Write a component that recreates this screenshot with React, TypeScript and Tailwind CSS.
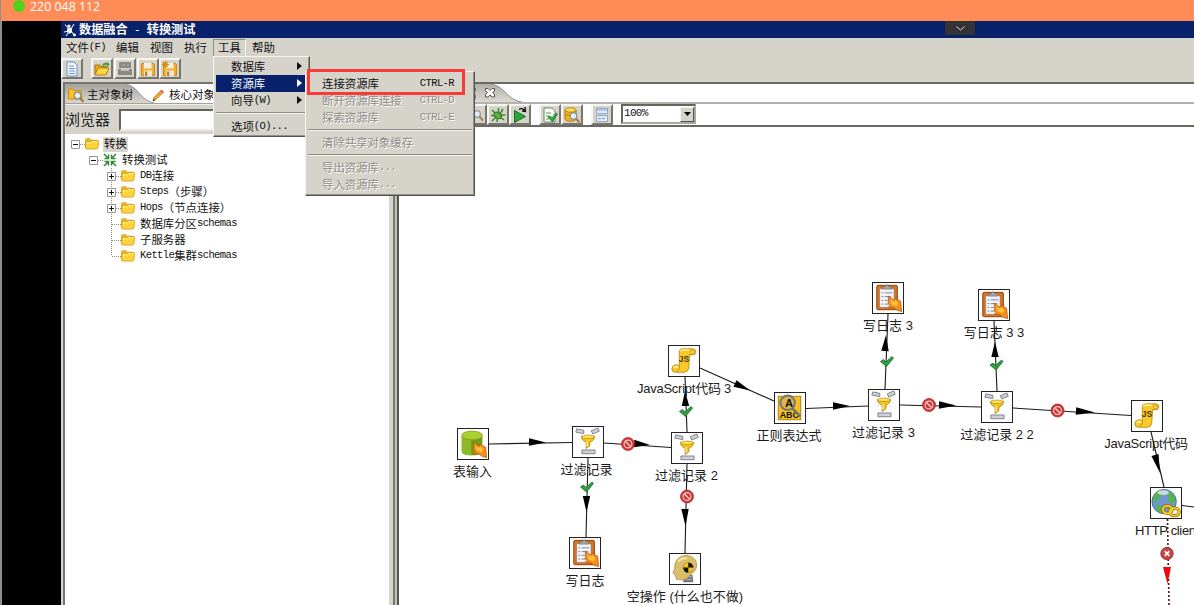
import React from "react";
import clsx from "clsx";

/* Splits mixed text so CJK glyphs and half-width Latin glyphs keep their own metrics. */
function Mixed({ text, bold }: { text: string; bold?: boolean }) {
  const runs = text.match(/[\u3000-\uffef]+|[^\u3000-\uffef]+/g) ?? [];
  return (
    <span className={clsx("inline-flex items-center whitespace-pre", bold && "font-bold")}>
      {runs.map((r, i) =>
        /[\u3000-\uffef]/.test(r) ? (
          <span key={i} className="font-['Noto_Sans_CJK_SC',sans-serif]">{r}</span>
        ) : (
          <span key={i} className="font-['Liberation_Mono','Noto_Sans_CJK_SC',monospace] text-[10.5px] tracking-[-0.6px]">{r}</span>
        ),
      )}
    </span>
  );
}

function Folder({ className = "h-[12px] w-[14px]" }: { className?: string }) {
  return (
    <svg viewBox="0 0 14 12" className={clsx("shrink-0", className)}>
      <path d="M.5 9.500V2Q.5.7 1.800.7H5l1.300 1.500h5.500q1 0 1 1v1" fill="#f4b820" stroke="#d39a18" strokeWidth=".8" />
      <path d="M.6 3.600h5.400l1-.9h5.800q.8 0 .7 1.200l-.6 6q-.2 1.100-1.400 1.100H2Q.7 11 .7 10.200Z" fill="#ffd43a" stroke="#cf9714" strokeWidth=".8" />
      <path d="M1.600 4.600H6.500l1-.9H12.500" stroke="#fff2a0" fill="none" />
    </svg>
  );
}

function ToolButton({ children, className }: { children: React.ReactNode; className?: string }) {
  return (
    <div className={clsx("flex h-[21px] w-[22px] shrink-0 items-center justify-center border-2 border-t-[#f6f5f1] border-r-[#77756f] border-b-[#77756f] border-l-[#f6f5f1] bg-[#d6d3cb]", className)}>
      <svg viewBox="0 0 16 16" className="h-[16px] w-[16px] shrink-0">{children}</svg>
    </div>
  );
}

function Floppy({ star }: { star?: boolean }) {
  return (
    <>
      <path d="M1.500 2.500h12l1 1v11h-13z" fill="#f5b02a" stroke="#cf8814" />
      <path d="M4 2h7.500v5.500H4z" fill="#f3efe4" />
      <path d="M4 9.500h8V15H4z" fill="#ece8dc" />
      <path d="M5 10.500h2.200V15H5z" fill="#c87c0c" />
      {star && <path d="M3.500 0v7M0 3.500h7M1 1l5 5M6 1 1 6" stroke="#d98a08" strokeWidth="1.100" />}
    </>
  );
}

function Magnifier({ x, y }: { x: number; y: number }) {
  return (
    <g transform={`translate(${x} ${y})`}>
      <path d="m2.500 2.500 3.500 4" stroke="#a87a3c" strokeWidth="2" />
      <circle r="3.300" fill="#e4eef2" stroke="#8b8f90" strokeWidth="1.200" />
    </g>
  );
}

function Connector({ kind }: { kind: "plus" | "minus" | "tee" | "end" }) {
  const boxed = kind === "plus" || kind === "minus";
  return (
    <svg viewBox="0 0 18 16" className="h-[16px] w-[18px] shrink-0">
      <path d="M9 8.500h9" stroke="#8c8c8c" strokeDasharray="1 1" />
      {kind !== "minus" && <path d={kind === "end" ? "M8.500 0v8" : "M8.500 0v16"} stroke="#8c8c8c" strokeDasharray="1 1" />}
      {boxed && (
        <>
          <path d="M4.500 4.500h8v8h-8z" fill="#fff" stroke="#959595" />
          <path d={kind === "plus" ? "M6 8.500h5M8.500 6v5" : "M6 8.500h5"} stroke="#111" />
        </>
      )}
    </svg>
  );
}

const treeRows: { indent: string; kind: "plus" | "minus" | "tee" | "end"; icon: "folder" | "trans"; label: string; selected?: boolean }[] = [
  { indent: "pl-[2px]", kind: "minus", icon: "folder", label: "转换", selected: true },
  { indent: "pl-[20px]", kind: "minus", icon: "trans", label: "转换测试" },
  { indent: "pl-[38px]", kind: "plus", icon: "folder", label: "DB连接" },
  { indent: "pl-[38px]", kind: "plus", icon: "folder", label: "Steps（步骤）" },
  { indent: "pl-[38px]", kind: "plus", icon: "folder", label: "Hops（节点连接）" },
  { indent: "pl-[38px]", kind: "tee", icon: "folder", label: "数据库分区schemas" },
  { indent: "pl-[38px]", kind: "tee", icon: "folder", label: "子服务器" },
  { indent: "pl-[38px]", kind: "end", icon: "folder", label: "Kettle集群schemas" },
];

type IconKind = "table" | "filter" | "log" | "dummy" | "js" | "regex" | "http";

const Hand = () => (
  <>
    <path d="m16 14 2.500 1.500 3.500 2.500 2-1.500 5.500 3 1 11-5-1.500-3.500-2.500-5.500-.5 1.500-2-2-2.500 1-2z" fill="#f58f1c" stroke="#b5560c" strokeWidth=".8" />
    <path d="m18 17 4 3 2-1.500 3 2.500-2 4-5-2z" fill="#ffc13c" />
  </>
);

function NodeIcon({ kind }: { kind: IconKind }) {
  return (
    <svg viewBox="0 0 32 32" className="h-full w-full">
      {kind === "table" && (
        <>
          <path d="M4 7v17c0 5.500 22 5.500 22 0V7" fill="#739c1b" />
          <path d="M4 7v17c0 2.500 4 4 10 4V10z" fill="#90b928" />
          <ellipse cx="15" cy="6.800" rx="11" ry="4.600" fill="#a9d02e" stroke="#7b9f25" strokeWidth=".8" />
          <Hand />
        </>
      )}
      {kind === "filter" && (
        <>
          <path d="m4 2 7.500 1.500v3.500L3 5.500zM19.500 4l7-3 1.500 3.500-7 3zM9.500 24.500h14v4h-14z" fill="#ccd0d8" stroke="#72767c" strokeWidth=".9" />
          <path d="M9 10h14c0 3-2 5-5 6v4l-4 3v-7c-3-1-5-3-5-6Z" fill="#f6c41d" stroke="#a5790b" strokeWidth=".8" />
          <ellipse cx="16" cy="10.500" rx="7" ry="1.800" fill="#ffe35a" stroke="#b5860c" strokeWidth=".7" />
          <path d="M15 15v6" stroke="#fff19a" strokeWidth="1.300" />
        </>
      )}
      {kind === "log" && (
        <>
          <rect x="4" y="2.500" width="22" height="26" rx="1.500" fill="#d9731c" stroke="#8d3c0c" />
          <path d="M7 6h15.500v20H7z" fill="#f1f3f9" stroke="#8c6b5a" strokeWidth=".6" />
          <path d="M10 6.500V4h3Q13 2 15 2t2 2h3v2.500z" fill="#a5a8a8" stroke="#5f6060" strokeWidth=".6" />
          <path d="M9 10.500h2m1.500 0h8m-11.500 4h2m1.500 0h7M9 18.500h2m1.500 0h5M9 22.500h2m1.500 0h4" stroke="#7c8292" strokeWidth="1" />
          <Hand />
        </>
      )}
      {kind === "dummy" && (
        <>
          <path d="M15 22h9l1 8H14z" fill="#777" />
          <path d="M16 24h7m-7 3h7" stroke="#bbb" />
          <path d="M7 27c-1-3-1-4-2-5l-2-2 2-4C4.500 6 11 1.500 17 1.500c8 0 11.500 5.500 11.500 10.500 0 6-5 8-7.500 11-3 5-8 5-14 4Z" fill="#d9bd68" stroke="#9c7f35" strokeWidth=".7" />
          <path d="M9 8c2-3 6-4 9-3" stroke="#f2dfa2" strokeWidth="2.500" fill="none" />
          <circle cx="19.500" cy="14.500" r="5.500" fill="#111" />
          <path d="M19.500 14.500v-5.500a5.500 5.500 0 0 0-5.500 5.500zM19.500 14.500v5.500a5.500 5.500 0 0 0 5.500-5.500z" fill="#efc51e" />
        </>
      )}
      {kind === "js" && (
        <>
          <path d="M11 6q0-3 4-3h10q4 0 3.500 4-.5 3-4 2.500L22 9l-1 15q-1 4-5 4H7q-4 0-4-3.500T7 20q3 0 4 1Z" fill="#f9c928" stroke="#b98310" strokeWidth=".9" />
          <path d="M12 5q3-1 9-.5M5 23q3-2 6 0" stroke="#fff09a" strokeWidth="1.600" fill="none" />
          <circle cx="25" cy="6.500" r="1.800" fill="#ffe77a" stroke="#b98310" strokeWidth=".7" />
          <path d="M11 21q1 4-3 6" stroke="#b98310" fill="none" />
          <text x="10.500" y="17.500" fontSize="9" fontWeight="bold" fontFamily="Liberation Sans, sans-serif" fill="#4a3a08">JS</text>
        </>
      )}
      {kind === "regex" && (
        <>
          <rect x="3.500" y="3.500" width="24" height="25" fill="#f7bf22" stroke="#a87c10" />
          <circle cx="13.500" cy="10.500" r="7.700" fill="#dfb64c" stroke="#777a74" strokeWidth="2.200" />
          <text x="15" y="15" textAnchor="middle" fontSize="12" fontWeight="bold" fontFamily="Liberation Sans, sans-serif" fill="#15130c">A</text>
          <text x="5" y="26.500" fontSize="9.500" fontWeight="bold" fontFamily="Liberation Sans, sans-serif" fill="#15130c">ABC</text>
          <path d="m18.500 16.500 8.500 8.500" stroke="#6d716d" strokeWidth="2.600" />
        </>
      )}
      {kind === "http" && (
        <>
          <circle cx="14" cy="14.500" r="13" fill="#6f97cc" stroke="#4d72a5" />
          <path d="M4 7 9 3l4 1-1 4-4 2-2 4-4 1Q2 10 4 7Zm14-3 5 2 3 5-1 4-4 1-3-4 1-3-3-2ZM5 18l5 1 3 4-3 4q-5-3-5-9Zm14 0 4 1-1 3-4 1Z" fill="#57b548" />
          <ellipse cx="13" cy="5" rx="6" ry="2.500" fill="#fff" opacity=".65" />
          <g fill="none" stroke="#9b6d05" strokeWidth="3.600"><ellipse cx="17.500" cy="23" rx="5" ry="4" /><ellipse cx="25" cy="25.500" rx="5" ry="4" /></g>
          <g fill="none" stroke="#fbd22a" strokeWidth="2"><ellipse cx="17.500" cy="23" rx="5" ry="4" /><ellipse cx="25" cy="25.500" rx="5" ry="4" /></g>
        </>
      )}
    </svg>
  );
}

/* Node boxes on the free canvas; cx is the middle of the caption. */
const nodes: { x: number; y: number; cx: number; kind: IconKind; label: string }[] = [
  { x: 457, y: 428, cx: 472.5, kind: "table", label: "表输入" },
  { x: 572, y: 426, cx: 586.5, kind: "filter", label: "过滤记录" },
  { x: 671, y: 432, cx: 686.5, kind: "filter", label: "过滤记录 2" },
  { x: 569, y: 537, cx: 585, kind: "log", label: "写日志" },
  { x: 669, y: 553, cx: 685, kind: "dummy", label: "空操作 (什么也不做)" },
  { x: 668, y: 345, cx: 684, kind: "js", label: "JavaScript代码 3" },
  { x: 774, y: 392, cx: 789, kind: "regex", label: "正则表达式" },
  { x: 872, y: 282, cx: 888, kind: "log", label: "写日志 3" },
  { x: 978, y: 289, cx: 994, kind: "log", label: "写日志 3 3" },
  { x: 868, y: 389, cx: 883.5, kind: "filter", label: "过滤记录 3" },
  { x: 981, y: 391, cx: 997, kind: "filter", label: "过滤记录 2 2" },
  { x: 1131, y: 400, cx: 1146, kind: "js", label: "JavaScript代码" },
  { x: 1150, y: 487, cx: 1167, kind: "http", label: "HTTP client" },
];

const OX = 399;
const OY = 127;

/* Hops: line ends, then the arrow head's base centre and tip. */
const hops = [
  [489, 444, 572, 442.5, 529, 442, 546, 442.5],
  [604, 443, 671, 447.5, 634, 443.5, 650, 445],
  [588, 458, 586, 537, 586.5, 496, 586.5, 512],
  [687, 432, 685, 377, 685.5, 406, 685, 391],
  [687, 464, 685, 553, 685, 509, 685.5, 526],
  [700, 368, 774, 401, 735, 383.5, 750, 390.5],
  [806, 408.5, 868, 406, 833, 406, 850, 406],
  [885, 389, 888, 314, 885, 351, 886, 335],
  [900, 405, 981, 407, 939, 405, 956, 405.5],
  [997, 391, 994, 321, 995, 357, 995, 342],
  [1013, 408, 1131, 415.5, 1076, 411, 1095, 412.5],
  [1151, 432, 1164, 487, 1155, 455, 1160, 473],
];

function head(bx: number, by: number, tx: number, ty: number) {
  const l = Math.hypot(tx - bx, ty - by);
  const nx = (-(ty - by) / l) * 3.7;
  const ny = ((tx - bx) / l) * 3.7;
  return `${bx + nx},${by + ny} ${bx - nx},${by - ny} ${tx},${ty}`;
}

const checks = [[587, 487], [686, 411.5], [887, 361.5], [996.5, 365]];
const stops = [[628, 444], [687, 496.5], [929, 405], [1057.5, 410.5]];

function Canvas() {
  return (
    <div className="relative grow overflow-hidden bg-white">
      {nodes.map((n) => (
        <React.Fragment key={n.label}>
          <div className="absolute h-[32px] w-[32px] border border-[#222] bg-white" style={{ left: n.x - OX, top: n.y - OY }}>
            <NodeIcon kind={n.kind} />
          </div>
          <div
            className={clsx(
              "absolute -translate-x-1/2 whitespace-pre font-['Liberation_Sans','Noto_Sans_CJK_SC',sans-serif] text-[13px] leading-[18px] text-[#1c1c1c]",
              n.kind === "js" && "tracking-[-0.25px]",
              n.kind === "http" && "tracking-[-0.35px]",
            )}
            style={{ left: n.cx - OX, top: n.y - OY + 35 }}
          >
            {n.label}
          </div>
        </React.Fragment>
      ))}
      <svg viewBox="399 127 795 478" className="absolute top-0 left-0 h-[478px] w-[795px]">
        {hops.map((h, i) => (
          <g key={i}>
            <path d={`M${h[0]} ${h[1]}L${h[2]} ${h[3]}`} stroke="#1a1a1a" strokeWidth="1.100" />
            <polygon points={head(h[4], h[5], h[6], h[7])} fill="#000" />
          </g>
        ))}
        <path d="M1182 505.500 1194 507" stroke="#1a1a1a" />
        <path d="M1167.500 519 1169 605" stroke="#5c1010" strokeWidth="1.600" strokeDasharray="2 2" />
        <polygon points="1163,567 1171,567 1167.500,584" fill="#f00808" />
        {checks.map(([x, y]) => (
          <g key={x} transform={`translate(${x} ${y})`}>
            <path d="M-6.500 0-3.500-2-1 .5 5-5 6.500-3.500-.5 5z" fill="#2f9e3f" stroke="#16702a" strokeWidth=".8" />
          </g>
        ))}
        {stops.map(([x, y]) => (
          <g key={x} transform={`translate(${x} ${y})`}>
            <circle r="6.500" fill="#cf3434" stroke="#b52c2c" strokeWidth=".8" />
            <circle r="3.900" fill="none" stroke="#f0cfcf" strokeWidth="1.100" />
            <path d="m-2.700-2.700 5.400 5.400" stroke="#f0cfcf" strokeWidth="1.500" />
          </g>
        ))}
        <g transform="translate(1167 553.500)">
          <circle r="6.200" fill="#c94444" stroke="#8f2c2c" strokeWidth=".8" />
          <path d="m-2.300-2.300 4.600 4.600m0-4.600-4.600 4.600" stroke="#fff" strokeWidth="1.800" />
        </g>
      </svg>
    </div>
  );
}

const popup = "absolute flex flex-col border border-t-[#f4f3ef] border-r-[#55534e] border-b-[#55534e] border-l-[#f4f3ef] bg-[#d6d3cb] text-[11.4px] leading-[17px] shadow-[inset_-1px_-1px_0_#94928b]";

function Arrow() {
  return (
    <svg viewBox="0 0 5 8" className="mb-[2px] h-[8px] w-[5px]"><path d="M0 0 5 4 0 8z" fill="currentColor" /></svg>
  );
}

function Rule({ className }: { className: string }) {
  return <div className={clsx("h-[2px] shrink-0 border-t border-b border-t-[#8e8c85] border-b-[#f4f3ef]", className)} />;
}

function ToolsMenu() {
  return (
    <div className={clsx(popup, "top-[56px] left-[213px] h-[81px] w-[97px] px-[2px] pt-[1px]")}>
      {["数据库", "资源库", "向导(W)"].map((t, i) => (
        <div key={t} className={clsx("flex h-[17px] shrink-0 items-center justify-between pr-[5px] pl-[15px]", i === 1 ? "bg-[#08216b] text-white" : "text-[#111]")}>
          <Mixed text={t} />
          <Arrow />
        </div>
      ))}
      <Rule className="mt-[3px] mb-[4px]" />
      <div className="flex h-[17px] items-center pl-[15px] text-[#111]"><Mixed text="选项(O)..." /></div>
    </div>
  );
}

function SubItem({ text, keys, off }: { text: string; keys?: string; off?: boolean }) {
  return (
    <div className={clsx("flex h-[17px] shrink-0 items-center justify-between pr-[18px] pl-[14px]", off ? "text-[#8f8d87] [text-shadow:1px_1px_0_#fff]" : "text-[#111]")}>
      <Mixed text={text} />
      {keys && <Mixed text={keys} />}
    </div>
  );
}

function RepositoryMenu() {
  return (
    <div className={clsx(popup, "top-[71px] left-[305px] h-[125px] w-[170px] px-[2px] pt-[3px]")}>
      <SubItem text="连接资源库" keys="CTRL-R" />
      <SubItem text="断开资源库连接" keys="CTRL-D" off />
      <SubItem text="探索资源库" keys="CTRL-E" off />
      <Rule className="mt-[3px] mb-[3px]" />
      <SubItem text="清除共享对象缓存" off />
      <Rule className="mt-[3px] mb-[3px]" />
      <SubItem text="导出资源库..." off />
      <SubItem text="导入资源库..." off />
      <div className="absolute top-[-3px] left-[1px] h-[26px] w-[158px] border-[3px] border-[#f93a36]" />
    </div>
  );
}

function LeftPanel() {
  return (
    <div className="flex w-[328px] shrink-0 flex-col border-t-2 border-l-2 border-t-[#77756f] border-l-[#77756f] bg-[#d6d3cb]">
      <div className="relative flex h-[19px] shrink-0 items-center overflow-hidden text-[11.5px] text-[#111]">
        <svg viewBox="0 0 326 19" className="absolute top-0 left-0 h-[19px] w-[326px]">
          <defs>
            <linearGradient id="tabShade" x1="0" x2="0" y1="0" y2="1"><stop offset="0" stopColor="#a5a39d" /><stop offset="1" stopColor="#d9d6cf" /></linearGradient>
          </defs>
          <path d="M0 0h326v19H0z" fill="#fff" />
          <path d="M0 0h60q8 1 14 9t15 10H0z" fill="url(#tabShade)" />
          <path d="M60 0q8 1 14 9t15 10" fill="none" stroke="#9a9892" />
        </svg>
        <div className="relative flex items-center pt-[3px] pl-[3px]">
          <svg viewBox="0 0 16 15" className="h-[15px] w-[16px]">
            <path d="M.5 11V2Q.5 1 2 1h3l1 1.500h7V5l1 6z" fill="#f9c22a" stroke="#c98a0c" />
            <Magnifier x={9.5} y={7.5} />
          </svg>
          <span className="ml-[3px]"><Mixed text="主对象树" /></span>
          <svg viewBox="0 0 12 13" className="ml-[19px] h-[13px] w-[12px]">
            <path d="M1 12 2 8.500 9 1.500l2 2-7 7z" fill="#f5ab28" stroke="#a86712" strokeWidth=".8" />
            <path d="m8 2.500 1.500-2L12 3l-1.500 1.500z" fill="#e06a5a" /><path d="m1 12 .6-2 1.400 1.400z" fill="#222" />
          </svg>
          <span className="ml-[5px]"><Mixed text="核心对象" /></span>
        </div>
      </div>
      <div className="h-[2px] shrink-0 border-b border-b-[#f0eee9] bg-[#a3a19b]" />
      <div className="flex h-[29px] shrink-0 items-center font-['Noto_Sans_CJK_SC',sans-serif] text-[15px] text-[#222]">
        <span className="w-[54px] whitespace-nowrap">浏览器</span>
        <div className="h-[22px] grow border-2 border-t-[#66645f] border-r-[#eceae5] border-b-[#eceae5] border-l-[#66645f] bg-white" />
      </div>
      <div className="mr-[2px] grow bg-white pt-[2px] text-[11.4px] text-[#111]">
        {treeRows.map((r) => (
          <div key={r.label} className={clsx("flex h-[16px] items-center", r.indent)}>
            <Connector kind={r.kind} />
            {r.icon === "folder" ? (
              <Folder />
            ) : (
              <svg viewBox="0 0 14 14" className="h-[14px] w-[14px]">
                <path d="m1 1 4 4m8-4L9 5M1 13l4-4m8 4L9 9M5.500 1.500v4h-4m7-4v4h4m-11 3h4v4m7-4h-4v4" stroke="#2f8b35" strokeWidth="1.500" fill="none" />
              </svg>
            )}
            <span className={clsx("ml-[4px] flex h-[15px] items-center px-[1px]", r.selected && "bg-[#d9d6cf]")}><Mixed text={r.label} /></span>
          </div>
        ))}
      </div>
    </div>
  );
}

function RightPanel() {
  return (
    <div className="flex grow flex-col border-l-2 border-l-[#55534e]">
      <div className="flex h-[22px] shrink-0 border-t-2 border-b-2 border-t-[#6b6964] border-b-[#b4b2ac] bg-white">
        <svg viewBox="0 0 125 18" className="h-[18px] w-[125px]">
          <defs><linearGradient id="docTab" x1="0" x2="0" y1="0" y2="1"><stop offset="0" stopColor="#b1afa9" /><stop offset="1" stopColor="#dcd9d2" /></linearGradient></defs>
          <path d="M0 0h91q9 1 16 9t16 9H0z" fill="url(#docTab)" />
          <path d="M91 0q9 1 16 9t16 9" fill="none" stroke="#8e8c86" />
          <path d="M75.500 4v3m0 4v4" stroke="#333" strokeWidth="2" />
          <path d="M86.500 4.500h2.500l2 2 2-2h2.500V7l-2 1.500 2 2v2.500H93l-2-2-2 2h-2.500v-2.500l2-2-2-1.500z" fill="#fff" stroke="#444" strokeWidth=".9" />
        </svg>
      </div>
      <div className="flex h-[21px] shrink-0 items-start bg-white pl-[66px]">
        <ToolButton><g opacity=".9"><Magnifier x={9} y={7} /></g></ToolButton>
        <ToolButton>
          <path d="m2 3 4 4M1 8.500h5M2 14l4-4m7-8-3 5m5.500 1H10m4 5-4-3M8.500 1v5m-1 4-.5 5" stroke="#3d8a30" strokeWidth="1.500" />
          <ellipse cx="8" cy="8.500" rx="4" ry="2.800" fill="#65ac3c" stroke="#2e7b2a" transform="rotate(30 8 8)" />
        </ToolButton>
        <ToolButton>
          <path d="M2.500 3.500v12l11-6z" fill="#2ba43b" stroke="#137023" />
          <path d="M7 2.500q3-2 6 1m0-3.500.5 4.500L10 4" stroke="#111" strokeWidth="1.300" fill="none" />
        </ToolButton>
        <ToolButton className="ml-[8px]">
          <path d="M2 1h8l3 3v11H2z" fill="#f5f8f3" stroke="#6d8a6d" />
          <path d="M4 6h5M4 9h3m-3 3h3" stroke="#5b9e5b" strokeWidth="1.200" />
          <path d="m6 10 2-1 2 2 4-5 1.500 1-5 8z" fill="#32a442" stroke="#187028" strokeWidth=".7" />
        </ToolButton>
        <ToolButton>
          <path d="M1 3v9c0 3 11 3 11 0V3" fill="#f0b51e" stroke="#b57c08" />
          <ellipse cx="6.500" cy="3" rx="5.500" ry="2.200" fill="#ffe05a" stroke="#b57c08" />
          <path d="M1 7c1 2 10 2 11 0" fill="none" stroke="#b57c08" />
          <Magnifier x={9.5} y={9} />
        </ToolButton>
        <ToolButton className="ml-[8px]">
          <path d="M2.500 1.500h11v5h-11zM2.500 8.500h11v6h-11z" fill="#eaf0f8" stroke="#8aa3cc" />
          <path d="M3 2h10v2H3z" fill="#b5c8e6" /><path d="M4 11.500h3m1 0h3" stroke="#8aa6cf" strokeWidth="1.500" />
        </ToolButton>
        <div className="ml-[8px] flex h-[20px] w-[75px] items-center justify-between border-2 border-t-[#66645f] border-r-[#a9a7a1] border-b-[#a9a7a1] border-l-[#66645f] bg-white pl-[1px] text-[#111]">
          <span className="pb-[2px] font-['Liberation_Mono',monospace] text-[11px] tracking-[-0.7px]">100%</span>
          <span className="flex h-[15px] w-[14px] items-center justify-center border border-t-[#f4f3ef] border-r-[#55534e] border-b-[#55534e] border-l-[#f4f3ef] bg-[#d6d3cb]">
            <svg viewBox="0 0 7 4" className="h-[4px] w-[7px]"><path d="M0 0h7L3.500 4z" /></svg>
          </span>
        </div>
      </div>
      <div className="h-[2px] shrink-0 bg-[#6b6964]" />
      <Canvas />
    </div>
  );
}

export default function App() {
  return (
    <div className="relative flex h-[605px] w-[1194px] flex-col overflow-hidden bg-black">
      <div className="flex h-[21px] shrink-0 items-start border-l border-l-[#8f8f8f] bg-[#ff8c57] pl-[12px]">
        <svg viewBox="0 0 12 12" className="h-[12px] w-[12px]"><circle cx="6" cy="6" r="6" fill="#52d11c" /></svg>
        <span className="ml-[5px] font-['Open_Sans',sans-serif] text-[12.4px] leading-[13px] text-white">220 048 112</span>
      </div>
      <div className="flex min-h-0 grow">
        <div className="w-[61px] shrink-0 border-l-2 border-l-[#8f8f8f] bg-black" />
        <div className="flex w-[1133px] shrink-0 flex-col bg-[#d6d3cb]">
          <div className="flex h-[17px] shrink-0 items-center bg-[#08216b] pl-[2px] text-[12.2px] text-white">
            <svg viewBox="0 0 14 14" className="mr-[2px] h-[14px] w-[14px]">
              <path d="M2 1.500 6 6m5-5L8 6M1 9l5-1m0 1-3 4m5-5 3 4" stroke="#dcebe2" strokeWidth="1.100" />
              <ellipse cx="6.500" cy="7.500" rx="2.500" ry="3" fill="#fff" /><circle cx="6" cy="3" r="1.600" fill="#fff" /><circle cx="11.500" cy="12" r="1.400" fill="#fff" />
            </svg>
            <Mixed text="数据融合" bold />
            <span className="w-[19px] text-center leading-[17px]">-</span>
            <Mixed text="转换测试" bold />
          </div>
          <div className="flex h-[18px] shrink-0 items-center pt-[1px] text-[11.4px] text-[#111]">
            <span className="w-[55px] pl-[5px]"><Mixed text="文件(F)" /></span>
            <span className="w-[34px]"><Mixed text="编辑" /></span>
            <span className="w-[34px]"><Mixed text="视图" /></span>
            <span className="w-[29px]"><Mixed text="执行" /></span>
            <span className="flex h-[17px] w-[33px] items-center justify-center self-end border border-b-0 border-t-[#8e8c85] border-r-[#f4f3ef] border-l-[#8e8c85]"><Mixed text="工具" /></span>
            <span className="ml-[6px]"><Mixed text="帮助" /></span>
          </div>
          <div className="flex h-[26px] shrink-0 items-start pt-[2px]">
            <ToolButton><path d="M3 1h7l3 3v11H3z" fill="#f2f7ff" stroke="#6d93c9" /><path d="M5 5h5M5 7.500h6M5 10h6m-6 2.500h6" stroke="#6d93c9" /></ToolButton>
            <ToolButton className="ml-[8px]">
              <path d="M1 13V4h5l1 1.500h6V8" fill="#e9a81c" stroke="#a8740c" />
              <path d="m1 14 3-7h11l-3 7z" fill="#ffd84a" stroke="#b57c08" />
              <path d="M8 4q2-3 5-2V.5l2.500 3L13 6V4q-2-1-3 1z" fill="#3e9e3d" />
            </ToolButton>
            <ToolButton className="ml-[1px]"><path d="M2 1h12v6H2zM1 8h14v6H1z" fill="#8b8983" /><path d="M5 4h3m2 0h2" stroke="#b5b2aa" /><path d="M4 9h8" stroke="#d6d3cb" strokeWidth="1.500" /></ToolButton>
            <ToolButton className="ml-[1px]"><Floppy /></ToolButton>
            <ToolButton><Floppy star /></ToolButton>
          </div>
          <div className="flex min-h-0 grow pl-[2px]">
            <LeftPanel />
            <div className="w-[2px] shrink-0 bg-[#d6d3cb]" />
            <div className="w-[2px] shrink-0 bg-[#77756f]" />
            <div className="w-[2px] shrink-0 bg-[#c4c2bb]" />
            <RightPanel />
          </div>
        </div>
      </div>
      <div className="absolute top-[21px] left-[945px] flex h-[14px] w-[30px] items-center justify-center bg-[#333]">
        <svg viewBox="0 0 9 5" className="h-[5px] w-[9px]"><path d="m.5.500 4 3.500 4-3.500" fill="none" stroke="#ddd" /></svg>
      </div>
      <ToolsMenu />
      <RepositoryMenu />
    </div>
  );
}
